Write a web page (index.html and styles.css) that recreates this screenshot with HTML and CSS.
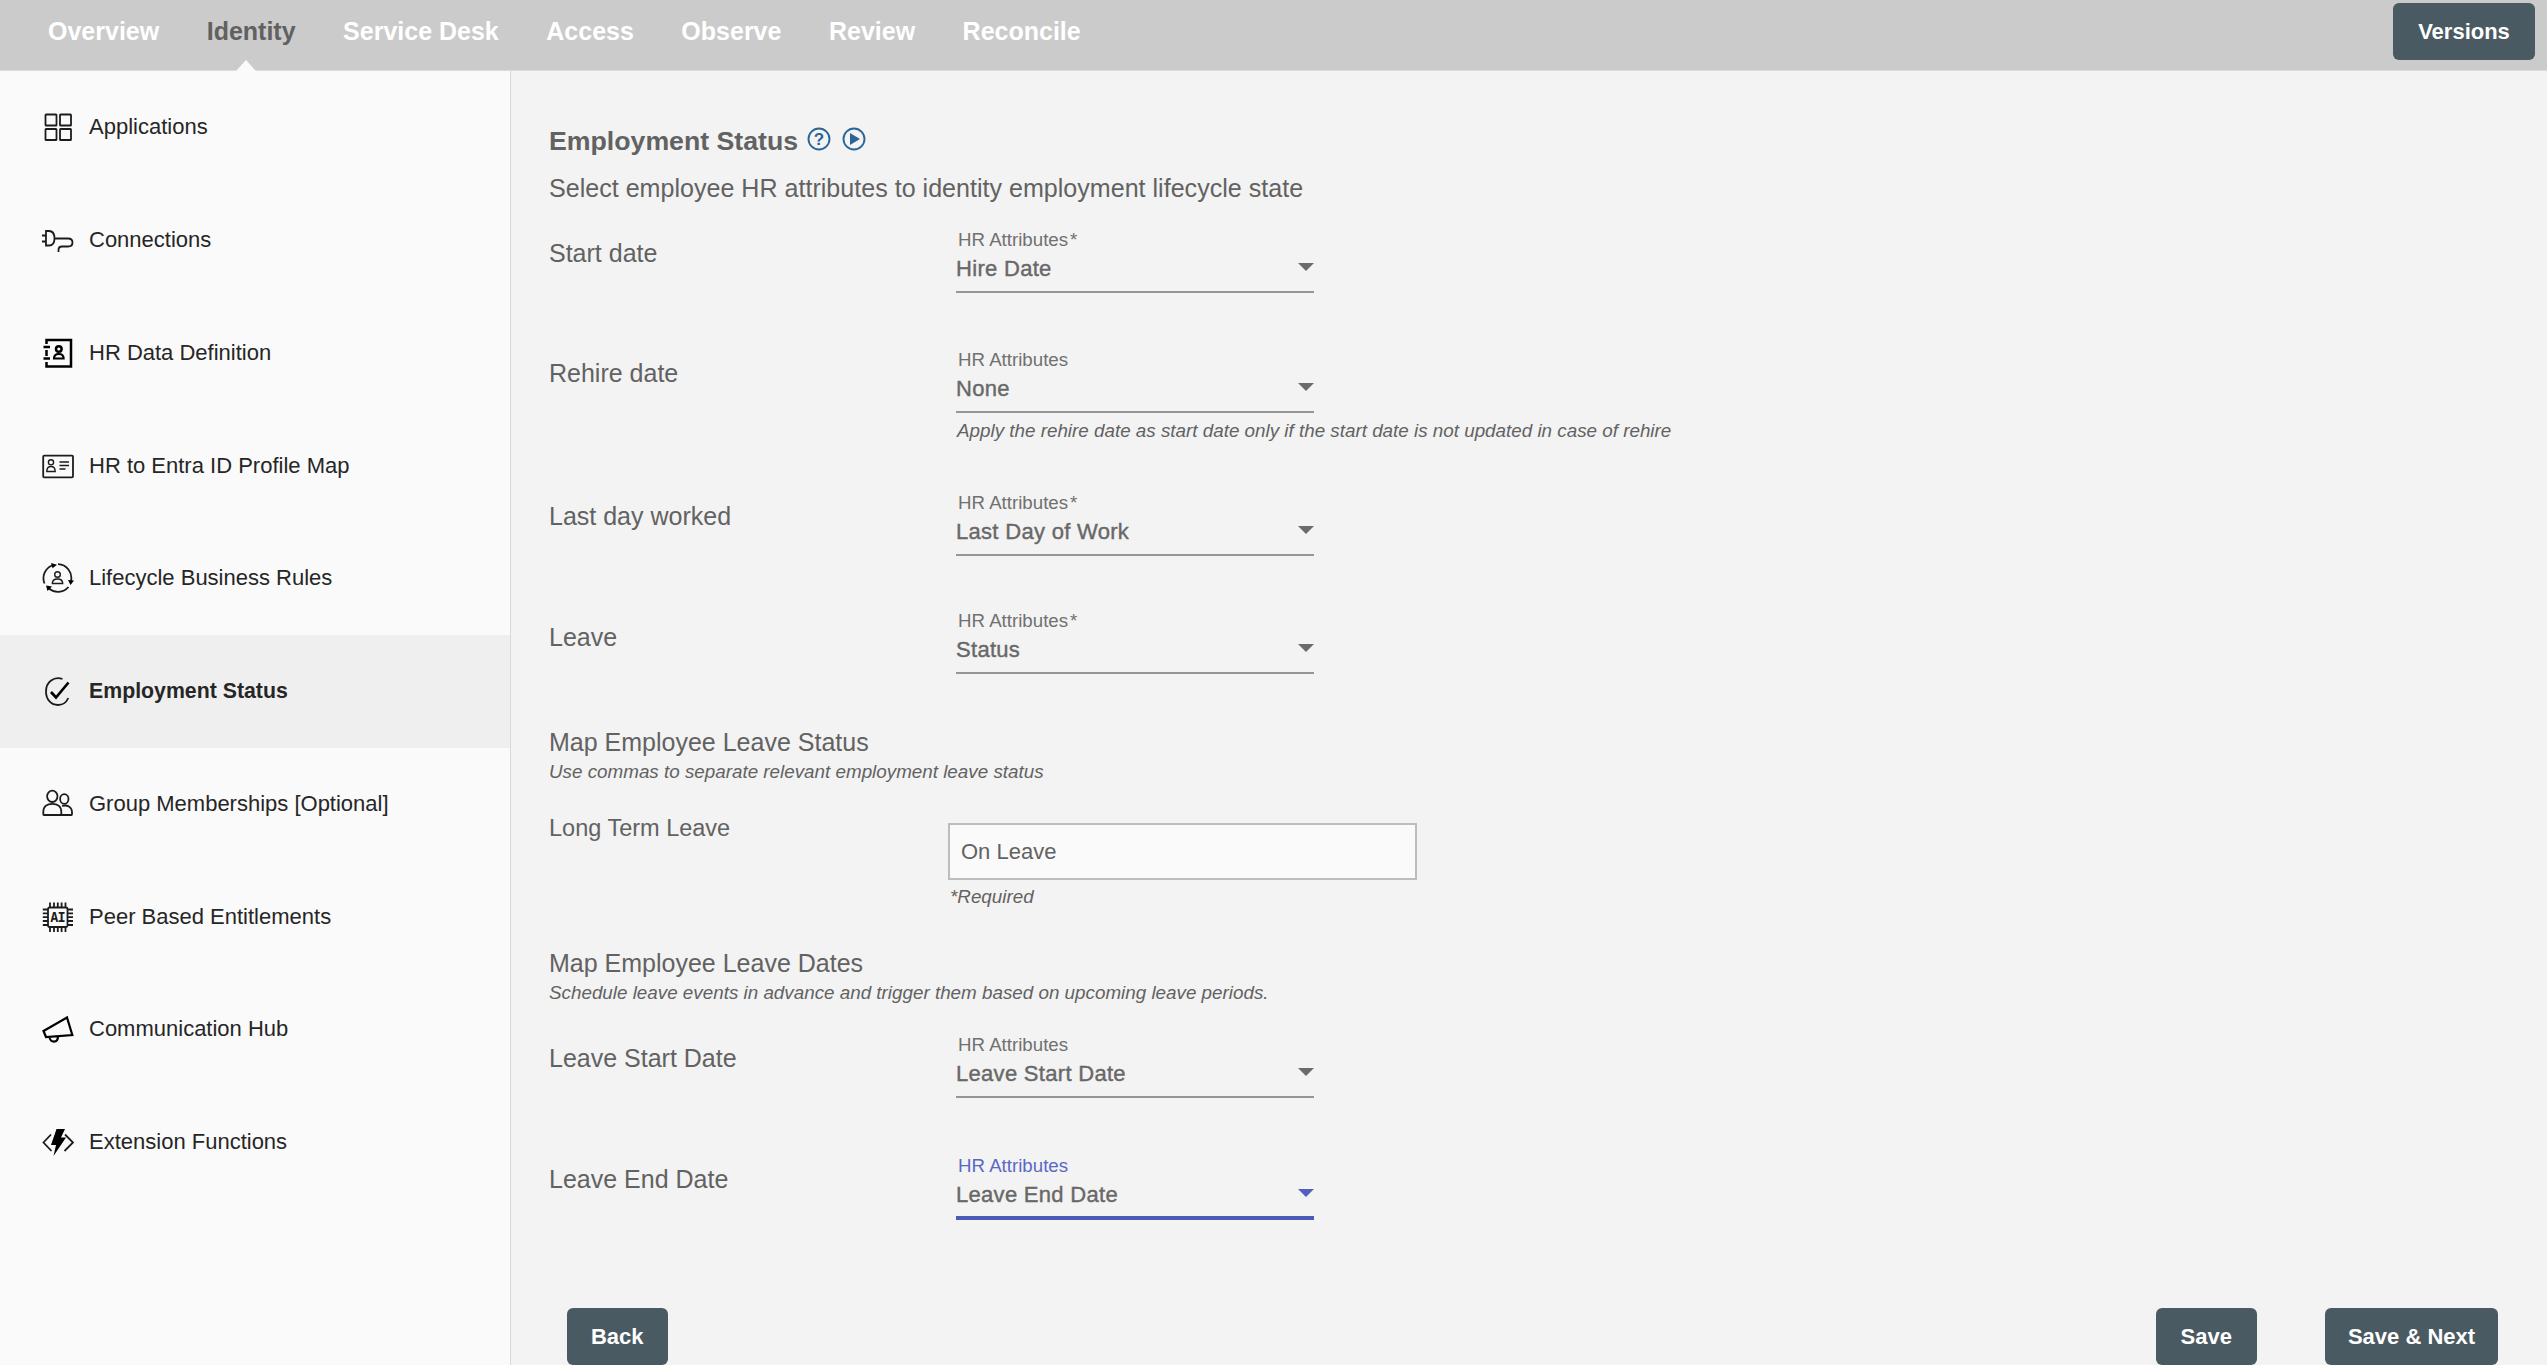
FILE: index.html
```html
<!DOCTYPE html>
<html lang="en">
<head>
  <meta charset="UTF-8">
  <title>Employment Status</title>
  <link rel="stylesheet" href="styles.css">
</head>
<body>
  <header class="topbar">
    <nav class="tabs">
      <a>Overview</a>
      <a class="active">Identity</a>
      <a>Service Desk</a>
      <a>Access</a>
      <a>Observe</a>
      <a>Review</a>
      <a>Reconcile</a>
    </nav>
    <button class="btn">Versions</button>
  </header>

  <div class="page">
    <ul class="sidebar">
      <li>
        <svg viewBox="0 0 32 32"><rect x="3.500" y="3.500" width="11" height="11" rx=".6"/><rect x="18" y="3.500" width="11" height="11" rx=".6"/><rect x="3.500" y="18" width="11" height="11" rx=".6"/><rect x="18" y="18" width="11" height="11" rx=".6"/></svg>
        <span>Applications</span>
      </li>
      <li>
        <svg viewBox="0 0 32 32"><path d="M4 7h3c3.500 0 5.500 3 5.500 7.500S10.500 21.500 7 21.500H4zM0 11.500h4M0 17.500h4M12.500 14.500h13.500c6 0 6 8 0 8h-6c-2.500 0-3.500 1-3.500 3.500v2"/></svg>
        <span>Connections</span>
      </li>
      <li>
        <svg class="heavy" viewBox="0 0 32 32"><path d="M4.500 7V3h24.500v26.500H4.500V25M4.500 13v6M1.500 10h6.500M1.500 21.500h6.500"/><circle cx="16.800" cy="12" r="2.800"/><path class="medium" d="M12 21.500c0-3 2-4.500 4.800-4.500s4.800 1.500 4.800 4.500z"/></svg>
        <span>HR Data Definition</span>
      </li>
      <li>
        <svg viewBox="0 0 32 32"><rect x="1.200" y="5.700" width="29.800" height="21.600" rx="1"/><g class="thin"><circle cx="9" cy="12.300" r="2.600"/><path d="M4.800 21.500c0-3.500 1.500-5 4.200-5s4.200 1.500 4.200 5zM17.500 12h9.500M17.500 15.500h9.500M17.500 19h6"/></g></svg>
        <span>HR to Entra ID Profile Map</span>
      </li>
      <li>
        <svg viewBox="0 0 32 32"><path d="M2.500 21.500A13.800 13.800 0 0 1 10 3.500M16 2.200A13.800 13.800 0 0 1 29 19M26.500 25A13.800 13.800 0 0 1 6.500 26"/><path class="solid" d="M9 1l6 1.700-4.500 3.500zM26 18l6 .500-3.500 4.500zM4 23.500l6 1-4.500 4.500z"/><g class="thin"><circle cx="15.500" cy="12.500" r="2.800"/><path d="M10.300 21.500c0-3.200 2.200-4.500 5.200-4.500s5.200 1.300 5.200 4.500z"/></g></svg>
        <span>Lifecycle Business Rules</span>
      </li>
      <li class="active">
        <svg viewBox="0 0 32 32"><path d="M20.500 4C12 1 4 7 4 16.500c0 8.500 5.500 13.500 12 13.500 4.500 0 8.500-3 10.300-7"/><path class="strong" d="M9 17l5 5.500L26.500 7.500"/></svg>
        <span>Employment Status</span>
      </li>
      <li>
        <svg viewBox="0 0 32 32"><ellipse cx="10.300" cy="8.300" rx="5.200" ry="5.700"/><path d="M1.300 26.300v-2.500c0-5.500 4-8 9-8s9 2.500 9 8v3.200H2c-.5 0-.7-.3-.7-.7z"/><ellipse cx="22.300" cy="11" rx="4.200" ry="4.800"/><path d="M20 18c5-1.500 10 .5 10 6.500v1.800c0 .5-.2.700-.7.700H19"/></svg>
        <span>Group Memberships [Optional]</span>
      </li>
      <li>
        <svg viewBox="0 0 32 32"><rect x="6" y="6.500" width="19.500" height="19.500" rx="1.500"/><path d="M8 1.500V6M12 1.500V6M15.800 1.500V6M19.600 1.500V6M23.500 1.500V6M8 26.500V31M12 26.500V31M15.800 26.500V31M19.600 26.500V31M23.500 26.500V31M.8 8.500h5M.8 12.300h5M.8 16.200h5M.8 20h5M.8 24h5M26 8.500h5M26 12.300h5M26 16.200h5M26 20h5M26 24h5"/><text x="15.600" y="21" text-anchor="middle">AI</text></svg>
        <span>Peer Based Entitlements</span>
      </li>
      <li>
        <svg viewBox="0 0 32 32"><path class="medium" d="M1.500 18L25 4.500l5.300 17.500L4 24zM7.500 24c.500 6 8.500 6.500 8.500-.800"/></svg>
        <span>Communication Hub</span>
      </li>
      <li>
        <svg viewBox="0 0 32 32"><path d="M9 8.500L1.500 16.500l8 8.500M23 8.500l8 8-8.500 8.500"/><path class="solid" d="M14.500 3h8.500l-4 8.500h5L11.500 30l2.500-11H9z"/></svg>
        <span>Extension Functions</span>
      </li>
    </ul>

    <main class="content">
      <h1>Employment Status
        <svg viewBox="0 0 24 24"><circle cx="12" cy="12" r="10.500"/><text x="12" y="18" text-anchor="middle">?</text></svg>
        <svg viewBox="0 0 24 24"><circle cx="12" cy="12" r="10.500"/><path d="M8 6L18 12 8 18z"/></svg>
      </h1>
      <p class="intro">Select employee HR attributes to identity employment lifecycle state</p>

      <div class="row">
        <label>Start date</label>
        <div class="select"><small>HR Attributes<i>*</i></small><b>Hire Date</b></div>
      </div>
      <div class="row row-rehire">
        <label>Rehire date</label>
        <div class="select"><small>HR Attributes</small><b>None</b></div>
        <p class="hint">Apply the rehire date as start date only if the start date is not updated in case of rehire</p>
      </div>
      <div class="row row-last">
        <label>Last day worked</label>
        <div class="select"><small>HR Attributes<i>*</i></small><b>Last Day of Work</b></div>
      </div>
      <div class="row row-leave">
        <label>Leave</label>
        <div class="select"><small>HR Attributes<i>*</i></small><b>Status</b></div>
      </div>

      <h2>Map Employee Leave Status</h2>
      <p class="hint">Use commas to separate relevant employment leave status</p>
      <div class="row row-input">
        <label>Long Term Leave</label>
        <div class="field">
          <input type="text" value="On Leave">
          <p class="hint">*Required</p>
        </div>
      </div>

      <h2>Map Employee Leave Dates</h2>
      <p class="hint">Schedule leave events in advance and trigger them based on upcoming leave periods.</p>
      <div class="row row-start">
        <label>Leave Start Date</label>
        <div class="select"><small>HR Attributes</small><b>Leave Start Date</b></div>
      </div>
      <div class="row row-end">
        <label>Leave End Date</label>
        <div class="select focused"><small>HR Attributes</small><b>Leave End Date</b></div>
      </div>

      <div class="actions">
        <button class="btn">Back</button>
        <button class="btn save">Save</button>
        <button class="btn next">Save &amp; Next</button>
      </div>
    </main>
  </div>
</body>
</html>
```
FILE: styles.css
```css
* {
  margin: 0;
  padding: 0;
  box-sizing: border-box;
}
body {
  height: 1365px;
  overflow: hidden;
  display: flex;
  flex-direction: column;
  font-family: "Liberation Sans", Arial, sans-serif;
  color: #626262;
  background: #f3f3f3;
}
ul {
  list-style: none;
}

/* top bar */
.topbar {
  height: 71px;
  flex: none;
  display: flex;
  justify-content: space-between;
  align-items: flex-start;
  padding: 3px 12px 0 48px;
  background: #cbcbcb;
  border-bottom: 1px solid #dcdcdc;
}
.tabs {
  display: flex;
  gap: 47.5px;
  padding-top: 13px;
}
.tabs a {
  position: relative;
  font-size: 25px;
  line-height: 30px;
  font-weight: bold;
  color: #fff;
}
.tabs a.active {
  color: #616161;
}
.tabs a.active::after {
  content: "";
  position: absolute;
  left: 29px;
  top: 44px;
  border: 10px solid transparent;
  border-top: 0;
  border-bottom: 11px solid #fafafa;
}
.btn {
  height: 57px;
  border: 0;
  border-radius: 6px;
  background: #4a5a62;
  color: #fff;
  font: bold 22px "Liberation Sans", Arial, sans-serif;
  white-space: nowrap;
}
.topbar .btn {
  width: 142px;
}

.page {
  flex: 1;
  display: flex;
}

/* sidebar */
.sidebar {
  width: 511px;
  background: #fafafa;
  border-right: 1px solid #d8d8d8;
}
.sidebar li {
  height: 112.750px;
  display: flex;
  align-items: center;
  gap: 15px;
  padding-left: 42px;
  font-size: 22px;
  color: #262626;
}
.sidebar li.active {
  background: #efefef;
}
.sidebar li.active span {
  font-weight: bold;
  font-size: 21.300px;
}
.sidebar svg {
  width: 32px;
  height: 32px;
  fill: none;
  stroke: #1c1c1c;
  stroke-width: 1.8;
}
.sidebar svg.heavy {
  stroke: #000;
  stroke-width: 2.5;
}
.sidebar .medium {
  stroke: #000;
  stroke-width: 2.2;
}
.sidebar .strong {
  stroke: #000;
  stroke-width: 2.7;
}
.sidebar .thin {
  stroke-width: 1.4;
}
.sidebar .solid {
  fill: #000;
  stroke: none;
}
.sidebar text {
  font: bold 13.500px "DejaVu Sans Mono", monospace;
  letter-spacing: -.8px;
  fill: #1c1c1c;
  stroke: none;
}

/* form */
.content {
  flex: 1;
  padding: 54px 0 0 38px;
}
h1 {
  display: flex;
  align-items: center;
  height: 32px;
  font-size: 26.700px;
  line-height: 32px;
}
h1 svg {
  width: 24px;
  height: 24px;
  margin: -5px 0 0 9px;
  fill: none;
  stroke: #2b6598;
  stroke-width: 1.9;
}
h1 svg + svg {
  margin-left: 11px;
}
h1 path,
h1 text {
  fill: #2b6598;
  stroke: none;
}
h1 text {
  font-size: 17px;
}
.intro {
  margin-top: 16px;
  font-size: 25.080px;
  line-height: 30px;
}
.row {
  display: grid;
  grid-template-columns: 407px 358px;
  margin-top: 25px;
}
.row label {
  padding-top: 10px;
  font-size: 25px;
  line-height: 30px;
}
.select {
  position: relative;
  height: 65px;
  border-bottom: 2px solid #969696;
}
.select::after {
  content: "";
  position: absolute;
  right: 0;
  top: 35px;
  border: 8px solid transparent;
  border-top-color: #6b6b6b;
  border-bottom: 0;
}
.select small,
.select b {
  display: block;
}
.select small {
  padding-left: 2px;
  margin-bottom: 2px;
  font-size: 18.700px;
  line-height: 24px;
  color: #707070;
}
.select i {
  margin-left: 2px;
  font-style: normal;
}
.select b {
  font-size: 22px;
  line-height: 30px;
  font-weight: normal;
  letter-spacing: .3px;
  color: #686868;
  -webkit-text-stroke: .4px #686868;
}
.select.focused {
  height: 66px;
  border-bottom: 4px solid #4c5ab7;
}
.select.focused small {
  color: #5a68c4;
}
.select.focused::after {
  border-top-color: #5261bd;
}
.hint {
  font-size: 18.820px;
  line-height: 24px;
  font-style: italic;
  white-space: nowrap;
}
.row .hint {
  grid-column: 2;
  margin-top: 5px;
}
.row-rehire {
  margin-top: 55px;
}
.row-rehire .hint {
  margin-top: 6px;
  padding-left: 1px;
}
.row-last {
  margin-top: 48px;
}
.row-leave {
  margin-top: 53px;
}
.row-leave label {
  padding-top: 13px;
}
h2 {
  margin-top: 53px;
  font-size: 25px;
  line-height: 30px;
  font-weight: normal;
}
h2 + .hint {
  margin-top: 3px;
}
.row-input {
  grid-template-columns: 399px 469px;
  margin-top: 29px;
}
.row-input label {
  padding: 0;
  font-size: 23.500px;
}
.field {
  padding-top: 10px;
}
.field input {
  display: block;
  width: 469px;
  height: 57px;
  padding: 0 11px;
  border: 2px solid #bdbdbd;
  background: #fafafa;
  font: 22px "Liberation Sans", Arial, sans-serif;
  color: #626262;
}
.field .hint {
  padding-left: 2px;
}
.row-input + h2 {
  margin-top: 39px;
}
.row-start {
  margin-top: 28px;
}
.row-end {
  margin-top: 56px;
}
.actions {
  display: flex;
  margin: 88px 49px 0 18px;
}
.actions .btn {
  width: 100.500px;
}
.actions .save {
  margin-left: auto;
}
.actions .next {
  width: 173px;
  margin-left: 68.500px;
}
```
